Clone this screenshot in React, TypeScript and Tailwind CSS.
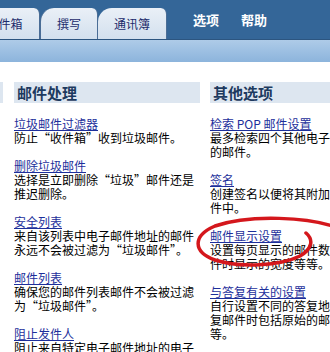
import React from "react";

const LEFT = [
  { title: "垃圾邮件过滤器", text: "防止“收件箱”收到垃圾邮件。" },
  { title: "删除垃圾邮件", text: "选择是立即删除“垃圾”邮件还是推迟删除。" },
  { title: "安全列表", text: "来自该列表中电子邮件地址的邮件永远不会被过滤为“垃圾邮件”。" },
  { title: "邮件列表", text: "确保您的邮件列表邮件不会被过滤为“垃圾邮件”。" },
  { title: "阻止发件人", text: "阻止来自特定电子邮件地址的电子邮件。" },
];

const RIGHT = [
  { title: "检索 POP 邮件设置", text: "最多检索四个其他电子邮件帐户中的邮件。" },
  { title: "签名", text: "创建签名以便将其附加到发送的邮件中。" },
  { title: "邮件显示设置", text: "设置每页显示的邮件数以及阅读邮件时显示的宽度等等。" },
  { title: "与答复有关的设置", text: "自行设置不同的答复地址，或在答复邮件时包括原始的邮件正文内容等。" },
];

function Section({ title, items }: { title: string; items: { title: string; text: string }[] }) {
  return (
    <div className="w-[186px] shrink-0">
      <div className="h-[21px] bg-[#dde6f0] pl-[3px] text-[15px] font-bold leading-[21px] text-[#1d3a5f]">
        {title}
      </div>
      <div className="mt-[14px] flex flex-col gap-[14px] text-[12px] leading-[14px]">
        {items.map((it) => (
          <div key={it.title}>
            <a href="#" className="text-[#1d2f9b] underline">
              {it.title}
            </a>
            <p className="text-black">{it.text}</p>
          </div>
        ))}
      </div>
    </div>
  );
}

export default function App() {
  return (
    <div
      lang="zh-CN"
      className="relative h-[352px] w-[330px] overflow-hidden bg-white font-['Noto_Sans_CJK_SC',sans-serif]"
    >
      <div className="flex h-[40px] items-end border-b border-[#2c5580] bg-[#346698]">
        <div className="-ml-[30px] flex shrink-0 items-end text-[12px] text-[#1c2b6b]">
          <div className="flex h-[31px] w-[70px] items-center justify-center rounded-tr-[6px] border-r border-[#4a6d96] bg-gradient-to-b from-[#eaf0f7] to-[#d3e0ee]">
            收件箱
          </div>
          <div className="flex h-[31px] w-[58px] items-center justify-center rounded-tl-[14px] rounded-tr-[6px] border-x border-[#4a6d96] bg-gradient-to-b from-[#eaf0f7] to-[#d3e0ee]">
            撰写
          </div>
          <div className="flex h-[31px] w-[69px] items-center justify-center rounded-tl-[14px] rounded-tr-[6px] border-r border-[#4a6d96] bg-gradient-to-b from-[#eaf0f7] to-[#d3e0ee]">
            通讯簿
          </div>
        </div>
        <div className="ml-[26px] flex h-full items-center gap-[22px] text-[13px] font-bold text-white">
          <span>选项</span>
          <span>帮助</span>
        </div>
      </div>
      <div className="h-[22px] bg-gradient-to-b from-[#aecbe8] to-[#8cb4dc]" />

      <div className="flex pt-[20px]">
        <div className="w-[3px] shrink-0">
          <div className="h-[21px] bg-[#dde6f0]" />
        </div>
        <div className="ml-[11px]">
          <Section title="邮件处理" items={LEFT} />
        </div>
        <div className="ml-[10px]">
          <Section title="其他选项" items={RIGHT} />
        </div>
      </div>

      <svg className="pointer-events-none absolute inset-0" width="330" height="352" viewBox="0 0 330 352">
        <path
          d="M 338 228 C 310 217, 250 214, 215 226 C 192 236, 193 252, 215 260 C 240 268, 280 266, 300 256 C 312 249, 314 240, 306 233"
          fill="none"
          stroke="#d4171c"
          strokeWidth="3.5"
          strokeLinecap="round"
        />
      </svg>
    </div>
  );
}
